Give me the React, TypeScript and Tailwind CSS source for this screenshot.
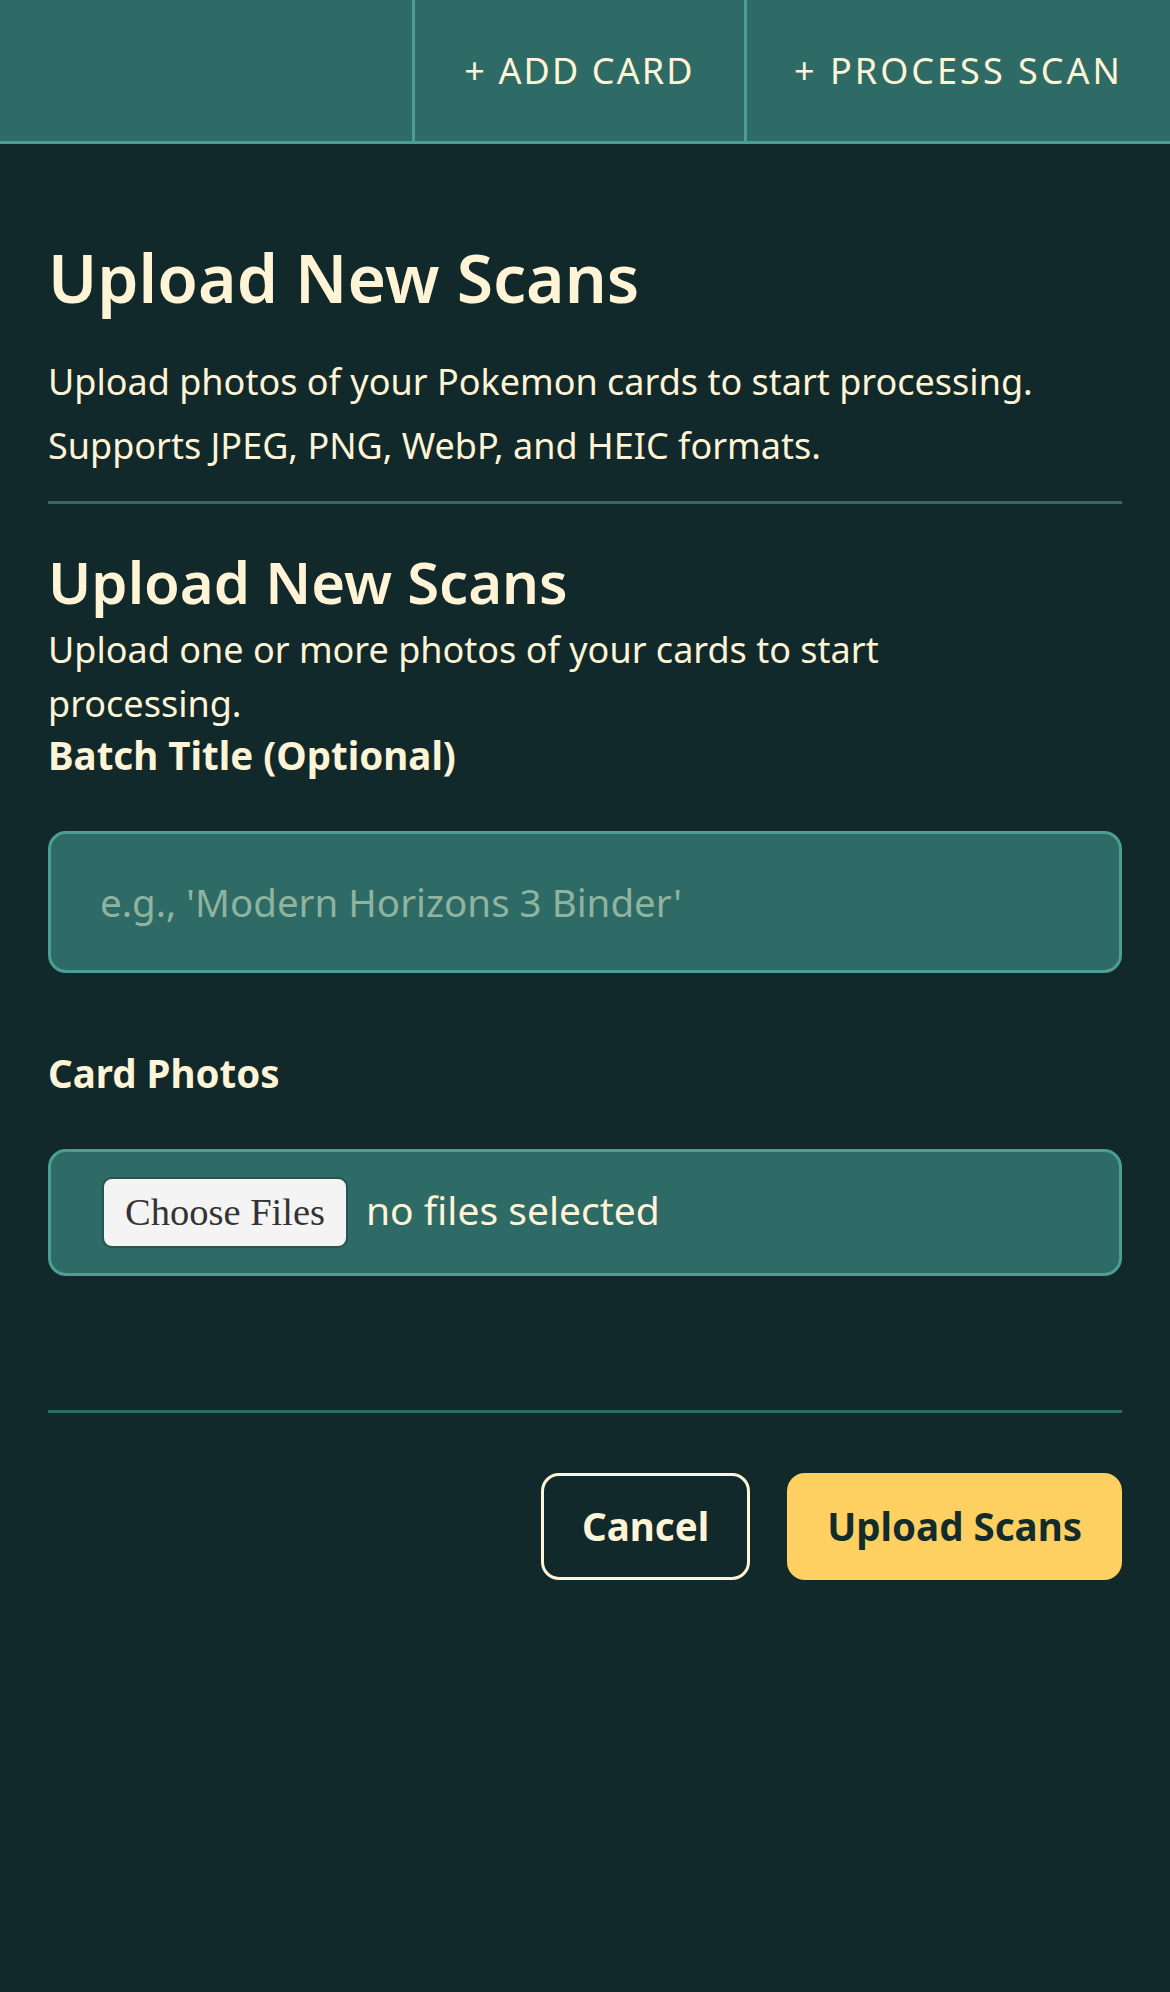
export default function App() {
  return (
    <div className="min-h-screen bg-[#11292b] font-['Noto_Sans',sans-serif] text-[#fff4d6]">
      <header className="flex h-[144px] border-b-[3px] border-[#4b9e94] bg-[#2e6b66]">
        <div className="flex-1" />
        <button className="w-[332px] border-l-[3px] border-[#4b9e94] text-[36px] uppercase tracking-[2.1px]">
          + Add Card
        </button>
        <button className="w-[426px] border-l-[3px] border-[#4b9e94] text-[36px] uppercase tracking-[3px]">
          + Process Scan
        </button>
      </header>

      <main className="px-12 pt-[93px]">
        <h1 className="text-[66px] font-semibold leading-[80px]">Upload New Scans</h1>
        <p className="mt-[33px] text-[36px] leading-[64px]">
          <span className="block">Upload photos of your Pokemon cards to start processing.</span>
          <span className="block">Supports JPEG, PNG, WebP, and HEIC formats.</span>
        </p>
        <div className="mt-[23px] border-t-[3px] border-[#2e6b66]" />

        <h2 className="mt-[42px] text-[58px] font-semibold leading-[72px]">Upload New Scans</h2>
        <p className="mt-[5px] max-w-[1000px] text-[36px] leading-[54px]">
          Upload one or more photos of your cards to start processing.
        </p>
        <label className="-mt-[3px] block text-[38.5px] font-bold leading-[54px]">Batch Title (Optional)</label>
        <input
          type="text"
          placeholder="e.g., 'Modern Horizons 3 Binder'"
          className="mt-[49px] block h-[142px] w-full rounded-[18px] border-[3px] border-[#4b9e94] bg-[#2e6b66] px-[49px] text-[38.5px] text-[#fff4d6] outline-none placeholder:text-[#8fb39f]"
        />

        <label className="mt-[73px] block text-[38.5px] font-bold leading-[54px]">Card Photos</label>
        <div className="mt-[49px] flex h-[127px] items-baseline gap-[18px] rounded-[18px] border-[3px] border-[#4b9e94] bg-[#2e6b66] px-[51px] pt-[25px]">
          <button className="h-[71px] rounded-[10px] border-2 border-[#26544f] bg-[#f4f4f4] px-[21px] font-['Liberation_Serif',serif] text-[38.5px] leading-none text-[#333333]">
            Choose Files
          </button>
          <span className="text-[39px]">no files selected</span>
        </div>

        <div className="mt-[134px] border-t-[3px] border-[#2e6b66]" />

        <div className="mt-[60px] flex justify-end gap-[37px]">
          <button className="h-[107px] rounded-[18px] border-[3px] border-[#fff4d6] px-[38px] text-[38.5px] font-bold">
            Cancel
          </button>
          <button className="h-[107px] rounded-[18px] bg-[#fed061] px-[40px] text-[38.5px] font-bold text-[#122b2b]">
            Upload Scans
          </button>
        </div>
      </main>
    </div>
  );
}
